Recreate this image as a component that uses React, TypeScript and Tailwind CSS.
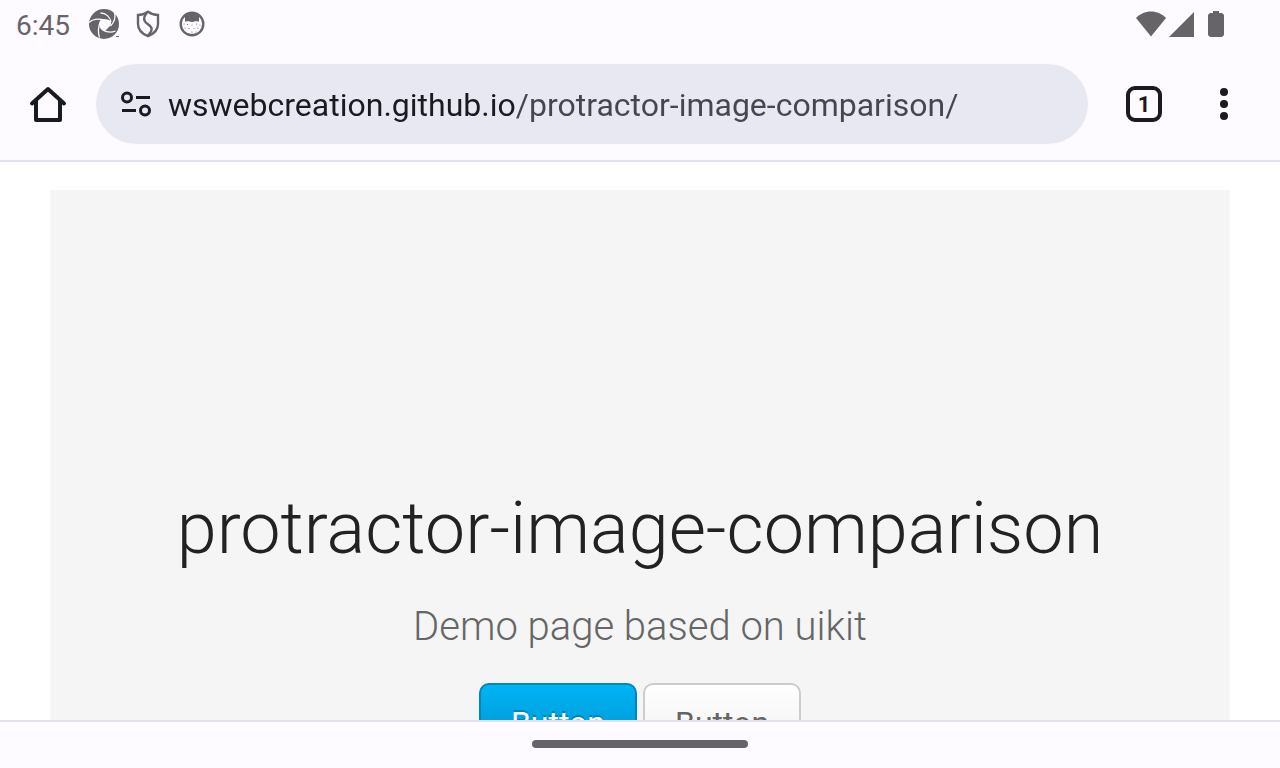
import { useState } from 'react';

function ShutterIcon() {
  return (
    <svg viewBox="0 0 32 32" className="size-8" aria-hidden="true">
      <circle cx="16" cy="16" r="15" fill="#676468" />
      <g fill="none" stroke="#fdfbff" strokeWidth="1.3">
        <path d="M1 14.500C5 11 9 10.500 14 11.500" />
        <path d="M12.500 5C18 5 22 9 23 14" />
        <path d="M26.500 4C28 10 26.500 14 22.500 18" />
        <path d="M27.500 23C23 25 19 24.500 15 22" />
        <path d="M11.500 29.500C10 25 10.500 18 12.500 13" />
      </g>
      <path d="M12.500 11.500C16 10.500 20 11 22.800 13.500C23.500 15 23 16.500 22 18L16.500 23.500C13.500 22.500 12 20.500 11.500 18Z" fill="#fdfbff" />
      <path d="M28 28h3v1h-3z" fill="#676468" />
    </svg>
  );
}

function ShieldIcon() {
  return (
    <svg viewBox="0 0 24 28" className="h-7 w-6" fill="none" stroke="#676468" strokeWidth="2.4" aria-hidden="true">
      <path d="M12 1.800C9 4 5.500 5 2 5V14C2 19.500 6 23.800 12 26.200C18 23.800 22 19.500 22 14V5C18.500 5 15 4 12 1.800Z" />
      <path d="M11 3C8 6 7.500 9 9 11.500C10.500 14 14.500 15 15.500 18C16 20.500 14.500 23 12 25.500" />
    </svg>
  );
}

function CatIcon() {
  return (
    <svg viewBox="0 0 26 26" className="size-[26px]" aria-hidden="true">
      <circle cx="13" cy="13" r="11.300" fill="#fdfbff" stroke="#676468" strokeWidth="2.400" />
      <path d="M4 7C6 3 9 2 13 2C17 2 20 3 22 7L20 6V10.500H18.500L16.500 10C14.500 11.300 11.500 11.300 9.500 10L7.500 10.500H6V6Z" fill="#676468" />
      <g fill="#676468">
        <circle cx="5" cy="13" r=".6" /><circle cx="8.500" cy="13.500" r=".6" /><circle cx="13" cy="14" r=".5" />
        <circle cx="17.500" cy="13" r=".6" /><circle cx="21" cy="14" r=".5" /><circle cx="6" cy="17" r=".5" />
        <circle cx="10" cy="17.500" r=".6" /><circle cx="15" cy="17.500" r=".5" /><circle cx="19" cy="17" r=".6" />
        <circle cx="13" cy="21" r=".6" /><circle cx="17" cy="21" r=".5" />
      </g>
    </svg>
  );
}

function StatusBar() {
  return (
    <header className="flex h-12 shrink-0 items-center justify-between pl-4 pr-14 text-[#676468]">
      <div className="flex items-center">
        <time className="w-[72px] pt-1 text-[28px] leading-8">6:45</time>
        <ShutterIcon />
        <span className="ml-4"><ShieldIcon /></span>
        <span className="ml-[19px]"><CatIcon /></span>
      </div>
      <div className="flex items-center">
        <svg viewBox="0 0 30 26" className="h-[26px] w-[30px]" fill="currentColor" aria-label="Wi-Fi">
          <path d="M15 25.500L0 7C4 3 9 .5 15 .5S26 3 30 7Z" />
        </svg>
        <svg viewBox="0 0 26 26" className="ml-[2px] size-[26px]" fill="currentColor" aria-label="Mobile signal">
          <path d="M1 26L26 1V26Z" />
        </svg>
        <svg viewBox="0 0 16 26" className="ml-[14px] h-[26px] w-4" fill="currentColor" aria-label="Battery">
          <path d="M5 0H11V2H14L16 4V24L14 26H2L0 24V4L2 2H5Z" />
        </svg>
      </div>
    </header>
  );
}

function Toolbar() {
  const [address, setAddress] = useState('wswebcreation.github.io/protractor-image-comparison/');
  return (
    <nav className="flex h-[114px] shrink-0 items-center border-b-2 border-[#e1e1ef] text-[#1a1b21]">
      <button type="button" aria-label="Home" className="flex h-20 w-24 items-center justify-center">
        <svg viewBox="0 0 40 40" className="size-10" fill="none" stroke="currentColor" strokeWidth="4" strokeLinejoin="round" aria-hidden="true">
          <path d="M4 19.500L20 5L36 19.500" strokeLinecap="round" />
          <path d="M8 17V36H32V17" />
        </svg>
      </button>
      <div className="flex h-20 min-w-0 grow items-center rounded-full bg-[#e7e8f2] pl-6 pr-8">
        <button type="button" aria-label="Site information" className="mr-4 shrink-0">
          <svg viewBox="0 0 32 32" className="size-8" fill="none" stroke="currentColor" strokeWidth="3" aria-hidden="true">
            <circle cx="7" cy="9.500" r="4.500" />
            <path d="M16 9.500H30M2 22.500H16" />
            <circle cx="25" cy="22.500" r="4.500" />
          </svg>
        </button>
        <input
          type="text"
          aria-label="Address"
          value={address}
          onChange={(event) => setAddress(event.target.value)}
          className="h-12 min-w-0 grow bg-[linear-gradient(to_right,#1a1b21_348px,#45464f_348px)] bg-clip-text pt-[2px] text-[32px] text-transparent caret-[#1a1b21] outline-none"
        />
      </div>
      <button type="button" aria-label="Tabs" className="ml-4 flex size-20 items-center justify-center">
        <span className="flex size-9 items-center justify-center rounded-[9px] border-4 border-current pt-[2px] text-[22px] leading-6 font-bold">1</span>
      </button>
      <button type="button" aria-label="More options" className="mr-4 flex size-20 items-center justify-center">
        <svg viewBox="0 0 8 32" className="h-8 w-2" fill="currentColor" aria-hidden="true">
          <circle cx="4" cy="4" r="4" />
          <circle cx="4" cy="16" r="4" />
          <circle cx="4" cy="28" r="4" />
        </svg>
      </button>
    </nav>
  );
}

export default function App() {
  return (
    <div className="flex h-screen flex-col overflow-hidden bg-[#fdfbff] font-['Roboto',sans-serif]">
      <StatusBar />
      <Toolbar />
      <main className="min-h-0 grow overflow-hidden bg-white px-[50px] pt-7">
        <section className="bg-[#f5f5f5] px-8 pt-[297px] pb-[300px] text-center">
          <h1 className="text-[72px] leading-[84px] font-light text-[#222222]">protractor-image-comparison</h1>
          <p className="mt-[26px] text-[40px] leading-[60px] font-light text-[#666666]">Demo page based on uikit</p>
          <div className="mt-[26px] flex justify-center gap-[6px] text-[32px] leading-[76px]">
            <button type="button" className="rounded-[10px] border-2 border-[#0088bb] bg-linear-to-b from-[#00b4f5] to-[#008dc5] px-[30px] text-white [text-shadow:0_-2px_0_rgba(0,0,0,0.2)]">
              Button
            </button>
            <button type="button" className="rounded-[10px] border-2 border-[#cccccc] bg-linear-to-b from-white to-[#eeeeee] px-[30px] text-[#666666] [text-shadow:0_2px_0_#ffffff]">
              Button
            </button>
          </div>
        </section>
      </main>
      <footer className="flex h-12 shrink-0 justify-center border-t-2 border-[#e1e1ef] pt-[18px]">
        <div className="h-2 w-[216px] rounded-full bg-[#676468]" />
      </footer>
    </div>
  );
}
